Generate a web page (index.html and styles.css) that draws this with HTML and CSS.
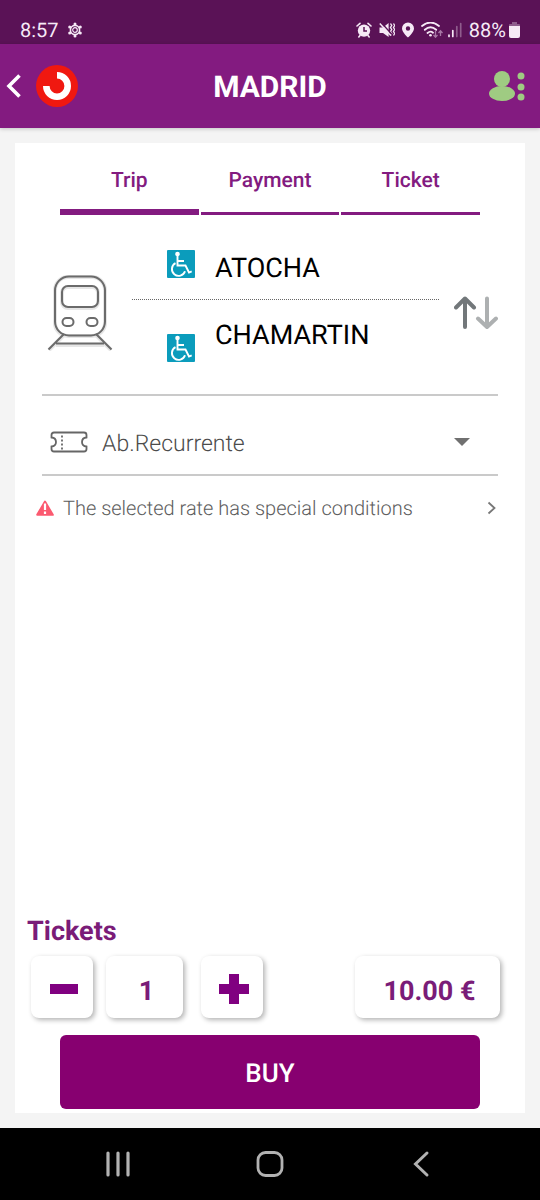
FILE: index.html
```html
<!DOCTYPE html>
<html lang="en">
<head>
<meta charset="utf-8">
<meta name="viewport" content="width=device-width, initial-scale=1">
<title>Madrid tickets</title>
<link rel="stylesheet" href="styles.css">
</head>
<body>
<div class="status">
  <span class="status-text">8:57</span>
  <svg class="status-gear" width="16" height="16" viewBox="0 0 16 16" aria-hidden="true">
    <circle cx="8" cy="8" r="4.6" fill="none" stroke="#f6e9f6" stroke-width="1.6"/>
    <circle cx="8" cy="8" r="2.3" fill="none" stroke="#f6e9f6" stroke-width="1.2"/>
    <g fill="#f6e9f6"><circle cx="8" cy="1.9" r="1.5"/><circle cx="8" cy="14.1" r="1.5"/><circle cx="2.7" cy="4.9" r="1.5"/><circle cx="13.3" cy="4.9" r="1.5"/><circle cx="2.7" cy="11.1" r="1.5"/><circle cx="13.3" cy="11.1" r="1.5"/></g>
  </svg>
  <div class="status-icons">
    <svg width="16" height="16" viewBox="0 0 16 16" aria-hidden="true">
      <circle cx="8" cy="8.6" r="6.2" fill="#f6e9f6"/>
      <path d="M8 5v4h3" fill="none" stroke="#5a1256" stroke-width="1.5"/>
      <path d="M1 4 4 1.3M15 4 12 1.3M4 13.5 2.8 15M12 13.5l1.2 1.5" stroke="#f6e9f6" stroke-width="1.6" stroke-linecap="round"/>
    </svg>
    <svg class="status-mute" width="16" height="16" viewBox="0 0 16 16" aria-hidden="true">
      <path d="M.5 5.500H4L9.600 1v14L4 11H.5z" fill="#f6e9f6"/>
      <path d="m11.500 1.500 1.200 2-1.200 2 1.200 2-1.200 2 1.200 2-1.200 2M14.500 1.500l1.200 2-1.200 2 1.200 2-1.200 2 1.200 2-1.200 2" fill="none" stroke="#f6e9f6" stroke-width="1.400"/>
      <path d="m2 .5 11 12" stroke="#5a1256" stroke-width="1.500"/>
      <path d="m.8 1.500 11 12" stroke="#f6e9f6" stroke-width="1.500"/>
    </svg>
    <svg width="16" height="16" viewBox="0 0 16 16" aria-hidden="true">
      <path fill="#f6e9f6" fill-rule="evenodd" d="M8 .5a6 6 0 0 1 6 6C14 10.500 8 15.500 8 15.500S2 10.500 2 6.500a6 6 0 0 1 6-6zM8 4.300a2.200 2.200 0 1 0 0 4.400 2.200 2.200 0 0 0 0-4.400z"/>
    </svg>
    <svg width="22" height="16" viewBox="0 0 22 16" aria-hidden="true">
      <path d="M1 4q8.500-7 17 0M3.800 7.800q5.700-5 11.400 0M6.500 11q3-2.500 5.500-.3" fill="none" stroke="#f6e9f6" stroke-width="1.800" stroke-linecap="round"/>
      <circle cx="9.500" cy="13.200" r="1.300" fill="#f6e9f6"/>
      <path d="M14.500 9v6M12.500 13l2 2.200 2-2.200M19.500 14V9M17.500 11l2-2.200 2 2.200" fill="none" stroke="#a777a5" stroke-width="1.300"/>
    </svg>
    <svg width="14" height="16" viewBox="0 0 14 16" aria-hidden="true">
      <path d="M1 13v1.500M4.800 8.500v6" stroke="#f6e9f6" stroke-width="1.700" stroke-linecap="round"/>
      <path d="M8.800 4.500v10M12.700 1.500v13" stroke="#8f5c8d" stroke-width="1.700" stroke-linecap="round"/>
    </svg>
  </div>
  <span class="status-text battery-text">88%</span>
  <svg width="11" height="16" viewBox="0 0 11 16" aria-hidden="true">
    <path d="M3 0h5v2h2q1 0 1 1v2H0V3q0-1 1-1h2z" fill="#8f5c8d"/>
    <path d="M0 4h11v10q0 2-2 2H2q-2 0-2-2z" fill="#f6e9f6"/>
  </svg>
</div>

<header class="topbar">
  <div class="topbar-start">
    <button class="icon-button" type="button" aria-label="Back">
      <svg width="16" height="26" viewBox="0 0 16 26"><path d="M13.500 2.500 3 13l10.500 10.500" fill="none" stroke="#fff" stroke-width="3.600"/></svg>
    </button>
    <svg width="42" height="42" viewBox="0 0 42 42" role="img" aria-label="Cercanías">
      <circle cx="21" cy="21" r="21" fill="#f01810"/>
      <path d="M21 10.300A10.700 10.700 0 1 1 10.300 21" fill="none" stroke="#fff" stroke-width="6.600"/>
    </svg>
  </div>
  <h1 class="topbar-title">MADRID</h1>
  <button class="icon-button topbar-end" type="button" aria-label="Account menu">
    <svg width="36" height="30" viewBox="0 0 36 30" fill="#9fcb82"><ellipse cx="13" cy="22.500" rx="13" ry="7.500"/><circle cx="13" cy="8" r="8"/><circle cx="32" cy="5" r="3.500"/><circle cx="32" cy="16" r="3.500"/><circle cx="32" cy="26" r="3.500"/></svg>
  </button>
</header>

<main class="page">
  <div class="card">
    <nav class="tabs" aria-label="Steps">
      <button class="tab tab-current" type="button" aria-current="step">Trip</button>
      <button class="tab" type="button">Payment</button>
      <button class="tab" type="button">Ticket</button>
    </nav>

    <section class="route" aria-label="Route">
      <svg class="train" width="66" height="76" viewBox="0 0 66 76" fill="none" aria-hidden="true">
        <g stroke="#e6e6e6" stroke-width="4"><rect x="8" y="2" width="50" height="59" rx="13"/><rect x="15" y="12" width="36" height="21" rx="6"/><path d="M17 60 2 75M49 60l15 15M9 70h48"/></g>
        <g stroke="#6b6b6b" stroke-width="2"><rect x="8" y="1.500" width="50" height="59" rx="14"/><rect x="15" y="11" width="36" height="21" rx="6"/><rect x="15.500" y="43" width="11" height="8" rx="4"/><rect x="39.500" y="43" width="11" height="8" rx="4"/><path d="M17 59 1.500 74.500M49 59l15.500 15.500M9 68.500h48"/></g>
      </svg>
      <div class="stops">
        <div class="stop stop-from">
          <svg class="access" width="28" height="28" viewBox="0 0 28 28" role="img" aria-label="Wheelchair accessible">
            <rect width="28" height="28" rx="1" fill="#0b9cbc"/><circle cx="10.500" cy="4" r="2.300" fill="#fff"/>
            <path d="M10.500 6v9.500h8l3.500 7 2.700-1.200M10.500 11h6.500" fill="none" stroke="#fff" stroke-width="1.900"/>
            <path d="M8.500 13.200a6.700 6.700 0 1 0 9.500 8" fill="none" stroke="#fff" stroke-width="1.900"/>
          </svg>
          <span>ATOCHA</span>
        </div>
        <div class="stop stop-to">
          <svg class="access" width="28" height="28" viewBox="0 0 28 28" role="img" aria-label="Wheelchair accessible">
            <rect width="28" height="28" rx="1" fill="#0b9cbc"/><circle cx="10.500" cy="4" r="2.300" fill="#fff"/>
            <path d="M10.500 6v9.500h8l3.500 7 2.700-1.200M10.500 11h6.500" fill="none" stroke="#fff" stroke-width="1.900"/>
            <path d="M8.500 13.200a6.700 6.700 0 1 0 9.500 8" fill="none" stroke="#fff" stroke-width="1.900"/>
          </svg>
          <span>CHAMARTIN</span>
        </div>
      </div>
      <button class="icon-button swap" type="button" aria-label="Swap stations">
        <svg width="44" height="34" viewBox="0 0 44 34" fill="none" stroke-width="4" stroke-linecap="round" stroke-linejoin="round"><path d="M11 31V2.500M2 11.500l9-9 9 9" stroke="#72777a"/><path d="M33 2.500V31M24 22.500l9 8.500 9-8.500" stroke="#adb0b1"/></svg>
      </button>
    </section>

    <div class="fare">
      <svg width="38" height="22" viewBox="0 0 38 22" fill="none" stroke="#666" stroke-width="1.800" aria-hidden="true">
        <path d="M4 1.500h30q2.500 0 2.500 2.500v2.500c-6 .5-6 8.500 0 9V18q0 2.500-2.500 2.500H4Q1.500 20.500 1.500 18v-2.500c6-.5 6-8.500 0-9V4Q1.500 1.500 4 1.500z"/>
        <path d="M12 4.500v14" stroke-dasharray="2 2"/>
      </svg>
      <select class="fare-select" aria-label="Fare"><option>Ab.Recurrente</option></select>
      <svg class="fare-arrow" width="16" height="8" viewBox="0 0 16 8" aria-hidden="true"><path d="M0 0h16L8 8z" fill="#707070"/></svg>
    </div>

    <button class="notice" type="button">
      <svg width="18" height="16" viewBox="0 0 18 16" aria-hidden="true"><path d="M9 1.500 16.800 14.800H1.200z" fill="#fb5a70" stroke="#fb5a70" stroke-width="2" stroke-linejoin="round"/><path d="M9 3.500v6.500M9 11.500V14" stroke="#fff" stroke-width="2.200"/></svg>
      <span>The selected rate has special conditions</span>
      <svg class="notice-arrow" width="9" height="14" viewBox="0 0 9 14" aria-hidden="true"><path d="m1.500 1.500 6 5.500-6 5.500" fill="none" stroke="#777" stroke-width="1.800"/></svg>
    </button>

    <section class="purchase">
      <h2 class="purchase-title">Tickets</h2>
      <div class="counter">
        <button class="tile tile-square" type="button" aria-label="Fewer tickets"><svg width="28" height="10" viewBox="0 0 28 10"><path d="M0 0h28v10H0z" fill="#800080"/></svg></button>
        <output class="tile tile-count">1</output>
        <button class="tile tile-square tile-plus" type="button" aria-label="More tickets"><svg width="30" height="30" viewBox="0 0 30 30"><path d="M10 0h10v10h10v10H20v10H10V20H0V10h10z" fill="#800080"/></svg></button>
        <output class="tile tile-price">10.00 €</output>
      </div>
      <button class="buy" type="button">BUY</button>
    </section>
  </div>
</main>

<nav class="system" aria-label="System">
  <button class="icon-button" type="button" aria-label="Recent apps"><svg width="28" height="28" viewBox="0 0 28 28"><path d="M4 3v22M14 3v22M24 3v22" stroke="#b2b2b2" stroke-width="3.200" stroke-linecap="round"/></svg></button>
  <button class="icon-button" type="button" aria-label="Home"><svg width="28" height="28" viewBox="0 0 28 28"><rect x="2" y="2.500" width="24" height="23" rx="7.500" fill="none" stroke="#b2b2b2" stroke-width="2.800"/></svg></button>
  <button class="icon-button" type="button" aria-label="System back"><svg width="28" height="28" viewBox="0 0 28 28"><path d="M19 3 7.500 14 19 25" fill="none" stroke="#b2b2b2" stroke-width="3" stroke-linecap="round"/></svg></button>
</nav>
</body>
</html>
```

FILE: styles.css
```css
* { box-sizing: border-box; }

body {
  margin: 0;
  min-height: 100vh;
  display: flex;
  flex-direction: column;
  background: #f4f4f4;
  font-family: Roboto, "Liberation Sans", sans-serif;
  text-rendering: geometricPrecision;
  color: #000;
}

button, select, output { font: inherit; color: inherit; text-rendering: inherit; }
button { border: 0; background: none; padding: 0; cursor: pointer; }
svg { display: block; flex: none; }

.icon-button { display: flex; align-items: center; justify-content: center; }

/* Status bar */
.status {
  display: flex;
  align-items: center;
  height: 44px;
  padding: 16px 20px 0;
  background: #5a1256;
}
.status-text { font-size: 20px; line-height: 26px; color: #f6e9f6; }
.status-gear { margin-left: 8px; }
.status-icons { display: flex; gap: 5px; margin-left: auto; }
.status-mute { margin-left: 2px; }
.battery-text { margin: 0 3px 0 7px; }

/* App bar */
.topbar {
  display: grid;
  grid-template-columns: 1fr auto 1fr;
  align-items: center;
  height: 84px;
  padding: 0 6px;
  background: #831b80;
  box-shadow: 0 1px 4px rgba(0, 0, 0, 0.2);
}
.topbar-start { display: flex; align-items: center; gap: 14px; }
.topbar-title { margin: 0; padding-top: 4px; font-size: 30px; line-height: 36px; font-weight: 700; color: #fff; }
.topbar-end { justify-self: end; margin-right: 9px; }

/* Card */
.page { flex: 1; display: flex; padding: 15px; }
.card { flex: 1; display: flex; flex-direction: column; background: #fff; padding-bottom: 4px; }

.tabs {
  display: grid;
  grid-template-columns: repeat(3, 1fr);
  gap: 2px;
  margin: 0 45px;
}
.tab {
  display: flex;
  justify-content: center;
  height: 72px;
  padding-top: 26px;
  border-bottom: 3px solid #831b80;
  font-size: 21px;
  line-height: 24px;
  font-weight: 500;
  color: #831b80;
}
.tab-current { border-bottom-width: 6px; }

.route {
  display: flex;
  margin: 0 27px;
  padding: 35px 0 32px;
  border-bottom: 2px solid #cacaca;
}
.train { margin: 25px 19px 0 5px; }
.stops { flex: 1; }
.stop { display: flex; gap: 20px; padding-left: 35px; font-size: 27px; line-height: 36px; }
.stop-from { padding-bottom: 13px; border-bottom: 1px dotted #666; }
.stop-to { margin-top: 17px; }
.stop-to .access { margin-top: 17px; }
.swap { align-self: flex-start; margin: 46px 0 0 15px; }

.fare {
  display: flex;
  align-items: center;
  height: 80px;
  margin: 0 27px;
  padding: 13px 28px 0 8px;
  border-bottom: 2px solid #cacaca;
}
.fare-select {
  flex: 1;
  height: 40px;
  margin-left: 14px;
  padding: 3px 0 0;
  border: 0;
  background: transparent;
  appearance: none;
  font-size: 23px;
  font-weight: 300;
  color: #4c4c4c;
}

.notice {
  display: flex;
  align-items: center;
  padding: 20px 29px 12px 21px;
  gap: 9px;
  font-size: 20px;
  line-height: 24px;
  font-weight: 300;
  color: #5c5c5c;
}
.notice-arrow { margin-left: auto; }

/* Purchase */
.purchase { margin-top: auto; }
.purchase-title { margin: 0 12px; font-size: 27px; line-height: 32px; font-weight: 700; color: #7a1c78; }
.counter { display: flex; margin: 9px 25px 17px 16px; }
.tile {
  display: flex;
  align-items: center;
  justify-content: center;
  height: 62px;
  border-radius: 8px;
  background: #fff;
  box-shadow: 2px 2px 5px rgba(0, 0, 0, 0.3);
  font-size: 27px;
  font-weight: 700;
  color: #7a1c78;
}
.tile-square { width: 62px; padding-top: 4px; padding-left: 4px; }
.tile-count { width: 77px; margin-left: 13px; padding: 7px 0 0 4px; }
.tile-plus { margin-left: 18px; }
.tile-price { width: 145px; margin-left: auto; padding: 7px 0 0 4px; }
.buy {
  display: block;
  width: calc(100% - 90px);
  height: 74px;
  margin: 0 45px;
  padding-top: 3px;
  border-radius: 6px;
  background: #870070;
  font-size: 26px;
  line-height: 32px;
  font-weight: 500;
  color: #fff;
}

/* System navigation */
.system {
  display: flex;
  justify-content: space-between;
  align-items: center;
  height: 72px;
  padding: 0 104px;
  background: #000;
}
```
